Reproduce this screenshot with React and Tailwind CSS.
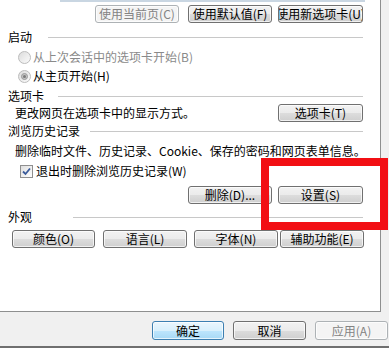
import React from 'react';

const font = "font-['Noto_Sans_CJK_SC',sans-serif]";

function Btn({ children, className = '', variant = 'normal' }) {
  const styles = {
    normal:
      'border-[#707070] bg-[linear-gradient(#f2f2f2_0%,#ebebeb_50%,#dddddd_50%,#cfcfcf_100%)] text-black',
    disabled: 'border-[#adb2b5] bg-[#f4f4f4] text-[#838383]',
    primary:
      'border-[#3c7fb1] bg-[linear-gradient(#eaf6fd_0%,#d9f0fc_50%,#bee6fd_50%,#a7d9f5_100%)] text-black',
  };
  return (
    <div
      className={`h-[18px] shrink-0 flex items-center justify-center overflow-hidden whitespace-nowrap rounded-[3px] border shadow-[inset_0_0_0_1px_rgba(255,255,255,0.7)] ${styles[variant]} ${className}`}
    >
      {children}
    </div>
  );
}

function Section({ label, labelW, className = '' }) {
  return (
    <div className={`flex items-center h-[14px] w-[363px] pl-[8px] ${className}`}>
      <span className={`${labelW} shrink-0`}>{label}</span>
      <div className="flex-1 h-px bg-[#c8c8c8]" />
    </div>
  );
}

function Radio({ checked }) {
  return (
    <div className="w-[13px] h-[13px] shrink-0 rounded-full border border-[#bcbcbc] bg-[linear-gradient(135deg,#dcdcdc,#fbfbfb)] flex items-center justify-center">
      {checked && (
        <div className="w-[7px] h-[7px] rounded-full border border-[#9a9a9a] bg-[#c4c4c4] flex items-center justify-center">
          <div className="w-[3px] h-[3px] rounded-full bg-[#7a7a7a]" />
        </div>
      )}
    </div>
  );
}

function Checkbox() {
  return (
    <div className="w-[13px] h-[13px] shrink-0 border border-[#8f8f8f] bg-[linear-gradient(135deg,#dedede,#ffffff)] flex items-center justify-center">
      <svg width="9" height="9" viewBox="0 0 9 9">
        <path d="M1 4.5 L3.5 7 L8 1.5" fill="none" stroke="#3a5b9b" strokeWidth="1.8" />
      </svg>
    </div>
  );
}

export default function App() {
  return (
    <div
      className={`relative w-[389px] h-[348px] bg-[#f0f0f0] border-b-2 border-[#6f6f6f] text-[12px] leading-[14px] text-black ${font} overflow-hidden`}
    >
      {/* white tab page */}
      <div className="w-[381px] h-[312px] bg-white border-r border-b border-[#8e8f8f] flex flex-col">
        {/* bottom edge of the home page text box */}
        <div className="ml-[60px] w-[305px] h-[2px] bg-[#c9d6e2]" />

        <div className="flex mt-[3px]">
          <Btn variant="disabled" className="ml-[95px] w-[84px]">使用当前页(C)</Btn>
          <Btn className="ml-[9px] w-[84px]">使用默认值(F)</Btn>
          <Btn className="ml-[6px] w-[85px]">使用新选项卡(U)</Btn>
        </div>

        <Section label="启动" labelW="w-[40px]" className="mt-[7px]" />

        <div className="flex items-center h-[14px] pl-[18px] gap-[2px] mt-[6px] text-[#8a8a8a]">
          <Radio />
          <span>从上次会话中的选项卡开始(B)</span>
        </div>
        <div className="flex items-center h-[14px] pl-[18px] gap-[2px] mt-[5px]">
          <Radio checked />
          <span>从主页开始(H)</span>
        </div>

        <Section label="选项卡" labelW="w-[50px]" className="mt-[6px]" />

        <div className="flex items-center w-[363px] pl-[15px] mt-[1px]">
          <span>更改网页在选项卡中的显示方式。</span>
          <Btn className="ml-auto w-[85px]">选项卡(T)</Btn>
        </div>

        <Section label="浏览历史记录" labelW="w-[82px]" className="mt-[2px]" />

        <div className="flex items-center h-[14px] pl-[15px] mt-[6px] whitespace-nowrap">
          删除临时文件、历史记录、Cookie、保存的密码和网页表单信息。
        </div>

        <div className="flex items-center h-[14px] pl-[20px] gap-[3px] mt-[6px]">
          <Checkbox />
          <span>退出时删除浏览历史记录(W)</span>
        </div>

        <div className="flex mt-[8px]">
          <Btn className="ml-[188px] w-[84px]">删除(D)...</Btn>
          <Btn className="ml-[6px] w-[85px]">设置(S)</Btn>
        </div>

        <Section label="外观" labelW="w-[65px]" className="mt-[6px]" />

        <div className="flex mt-[6px]">
          <Btn className="ml-[12px] w-[83px]">颜色(O)</Btn>
          <Btn className="ml-[8px] w-[84px]">语言(L)</Btn>
          <Btn className="ml-[7px] w-[84px]">字体(N)</Btn>
          <Btn className="ml-[2px] w-[84px]">辅助功能(E)</Btn>
        </div>
      </div>

      {/* dialog buttons */}
      <div className="flex mt-[9px]">
        <Btn variant="primary" className="ml-[152px] w-[72px] h-[19px]">确定</Btn>
        <Btn className="ml-[9px] w-[73px] h-[19px]">取消</Btn>
        <Btn variant="disabled" className="ml-[9px] w-[73px] h-[19px]">应用(A)</Btn>
      </div>

      {/* red annotation box */}
      <div className="absolute left-[261px] top-[158px] w-[127px] h-[72px] border-[8px] border-[#f20f14]" />
    </div>
  );
}
